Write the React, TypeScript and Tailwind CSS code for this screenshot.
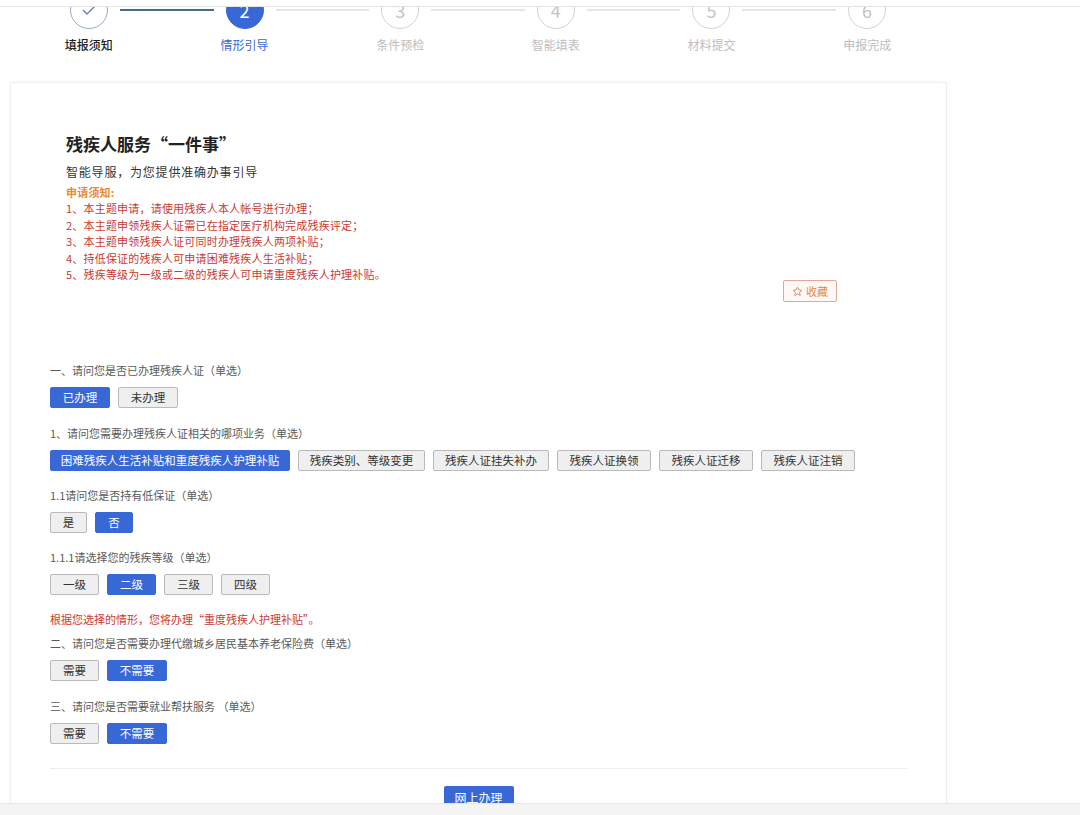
import { useState } from 'react';

const steps = ['填报须知', '情形引导', '条件预检', '智能填表', '材料提交', '申报完成'];

const notices = [
  '1、本主题申请，请使用残疾人本人帐号进行办理；',
  '2、本主题申领残疾人证需已在指定医疗机构完成残疾评定；',
  '3、本主题申领残疾人证可同时办理残疾人两项补贴；',
  '4、持低保证的残疾人可申请困难残疾人生活补贴；',
  '5、残疾等级为一级或二级的残疾人可申请重度残疾人护理补贴。',
];

function Opt({ label, active, w, onClick }: any) {
  return (
    <button
      onClick={onClick}
      className={`h-[21px] ${w} rounded-[2px] border text-[11.5px] leading-none ${
        active ? 'bg-[#3867d6] border-[#3867d6] text-white' : 'bg-[#efefef] border-[#b9b9b9] text-[#333]'
      }`}
    >
      {label}
    </button>
  );
}

function Question({ title, children, className = '' }: any) {
  return (
    <div className={className}>
      <div className="text-[11px] leading-[16px] text-[#5a5a5a]">{title}</div>
      <div className="mt-[9px] flex gap-[8px]">{children}</div>
    </div>
  );
}

export default function App() {
  const [q1, setQ1] = useState(0);
  const [q2, setQ2] = useState(0);
  const [q11, setQ11] = useState(1);
  const [lvl, setLvl] = useState(1);
  const [q3, setQ3] = useState(1);
  const [q4, setQ4] = useState(1);

  const q2opts = [
    ['困难残疾人生活补贴和重度残疾人护理补贴', 'w-[240px]'],
    ['残疾类别、等级变更', 'w-[127px]'],
    ['残疾人证挂失补办', 'w-[116px]'],
    ['残疾人证换领', 'w-[94px]'],
    ['残疾人证迁移', 'w-[94px]'],
    ['残疾人证注销', 'w-[94px]'],
  ];

  return (
    <div
      className="relative h-[815px] w-[1080px] overflow-hidden bg-white"
      style={{ fontFamily: '"Noto Sans CJK SC", "Noto Sans", sans-serif' }}
    >
      <div className="relative z-10 h-[7px] border-b border-[#e2e2e2] bg-white" />

      {/* stepper */}
      <div className="ml-[11px] w-[934px]">
        <div className="-mt-[16px] flex items-center px-[59px]">
          {steps.map((s, i) => (
            <div key={s} className={`flex items-center ${i < steps.length - 1 ? 'flex-1' : ''}`}>
              <div
                className={`flex h-[38px] w-[38px] shrink-0 items-center justify-center rounded-full border text-[18px] ${
                  i === 0
                    ? 'border-[#9aa8cc] text-[#6d83b8]'
                    : i === 1
                    ? 'border-[#3867d6] bg-[#3867d6] text-white'
                    : 'border-[#d3d3d3] text-[#c4c4c4]'
                }`}
              >
                {i === 0 ? (
                  <svg width="16" height="12" viewBox="0 0 16 12" fill="none">
                    <path d="M2 6l4 4 8-8" stroke="#6d83b8" strokeWidth="1.4" />
                  </svg>
                ) : (
                  i + 1
                )}
              </div>
              {i < steps.length - 1 && (
                <div className={`mx-[12px] h-[2px] flex-1 ${i === 0 ? 'bg-[#4d6a8f]' : 'bg-[#e6e6e6]'}`} />
              )}
            </div>
          ))}
        </div>
        <div className="mt-[8px] grid grid-cols-6 text-center text-[12px] leading-[16px]">
          {steps.map((s, i) => (
            <div
              key={s}
              className={i === 0 ? 'font-medium text-[#222]' : i === 1 ? 'text-[#3867d6]' : 'text-[#bdbdbd]'}
            >
              {s}
            </div>
          ))}
        </div>
      </div>

      {/* card */}
      <div className="ml-[10px] mt-[29px] w-[937px] border border-[#efefef] px-[39px] pb-[40px] shadow-[0_0_4px_rgba(0,0,0,0.04)]">
        <div className="pl-[16px] pt-[49px]">
          <div className="text-[17px] font-bold leading-[24px] text-[#222]">残疾人服务“一件事”</div>
          <div className="mt-[7px] text-[12px] leading-[18px] tracking-[0.8px] text-[#333]">
            智能导服，为您提供准确办事引导
          </div>
          <div className="mt-[3px] text-[11px] leading-[16.4px] tracking-[0.2px]">
            <div className="font-bold text-[#e68a2e]">申请须知:</div>
            {notices.map((n) => (
              <div key={n} className="text-[#c93a32]">
                {n}
              </div>
            ))}
          </div>
        </div>
        <div className="-mt-[2px] flex justify-end pr-[70px]">
          <button className="flex h-[22px] w-[54px] items-center justify-center gap-[3px] rounded-[2px] border border-[#e3a899] bg-[#fff8f5] text-[11px] text-[#e38a3d]">
            <svg width="11" height="11" viewBox="0 0 24 24" fill="none" stroke="#d98a6a" strokeWidth="2">
              <path d="M12 2.5l2.9 6.1 6.6.8-4.9 4.6 1.3 6.6L12 17.3l-5.9 3.3 1.3-6.6-4.9-4.6 6.6-.8z" />
            </svg>
            收藏
          </button>
        </div>

        <Question title="一、请问您是否已办理残疾人证（单选）" className="mt-[60px]">
          <Opt label="已办理" w="w-[60px]" active={q1 === 0} onClick={() => setQ1(0)} />
          <Opt label="未办理" w="w-[60px]" active={q1 === 1} onClick={() => setQ1(1)} />
        </Question>

        <Question title="1、请问您需要办理残疾人证相关的哪项业务（单选）" className="mt-[17px]">
          {q2opts.map(([l, w], i) => (
            <Opt key={l} label={l} w={w} active={q2 === i} onClick={() => setQ2(i)} />
          ))}
        </Question>

        <Question title="1.1请问您是否持有低保证（单选）" className="mt-[16px]">
          <Opt label="是" w="w-[37px]" active={q11 === 0} onClick={() => setQ11(0)} />
          <Opt label="否" w="w-[38px]" active={q11 === 1} onClick={() => setQ11(1)} />
        </Question>

        <Question title="1.1.1请选择您的残疾等级（单选）" className="mt-[16px]">
          {['一级', '二级', '三级', '四级'].map((l, i) => (
            <Opt key={l} label={l} w="w-[49px]" active={lvl === i} onClick={() => setLvl(i)} />
          ))}
        </Question>

        <div className="mt-[16px] text-[11px] leading-[16px] text-[#c93a32]">
          根据您选择的情形，您将办理“重度残疾人护理补贴”。
        </div>

        <Question title="二、请问您是否需要办理代缴城乡居民基本养老保险费（单选）" className="mt-[8px]">
          <Opt label="需要" w="w-[49px]" active={q3 === 0} onClick={() => setQ3(0)} />
          <Opt label="不需要" w="w-[60px]" active={q3 === 1} onClick={() => setQ3(1)} />
        </Question>

        <Question title="三、请问您是否需要就业帮扶服务 （单选）" className="mt-[17px]">
          <Opt label="需要" w="w-[49px]" active={q4 === 0} onClick={() => setQ4(0)} />
          <Opt label="不需要" w="w-[60px]" active={q4 === 1} onClick={() => setQ4(1)} />
        </Question>

        <div className="mt-[24px] border-t border-[#ececec]" />
        <div className="mt-[17px] flex justify-center">
          <button className="h-[24px] w-[70px] rounded-[2px] bg-[#3867d6] text-[12px] text-white">网上办理</button>
        </div>
      </div>

      <div className="absolute bottom-0 left-0 h-[12px] w-full border-t border-[#e8e8e8] bg-[#f4f4f4]" />
    </div>
  );
}
